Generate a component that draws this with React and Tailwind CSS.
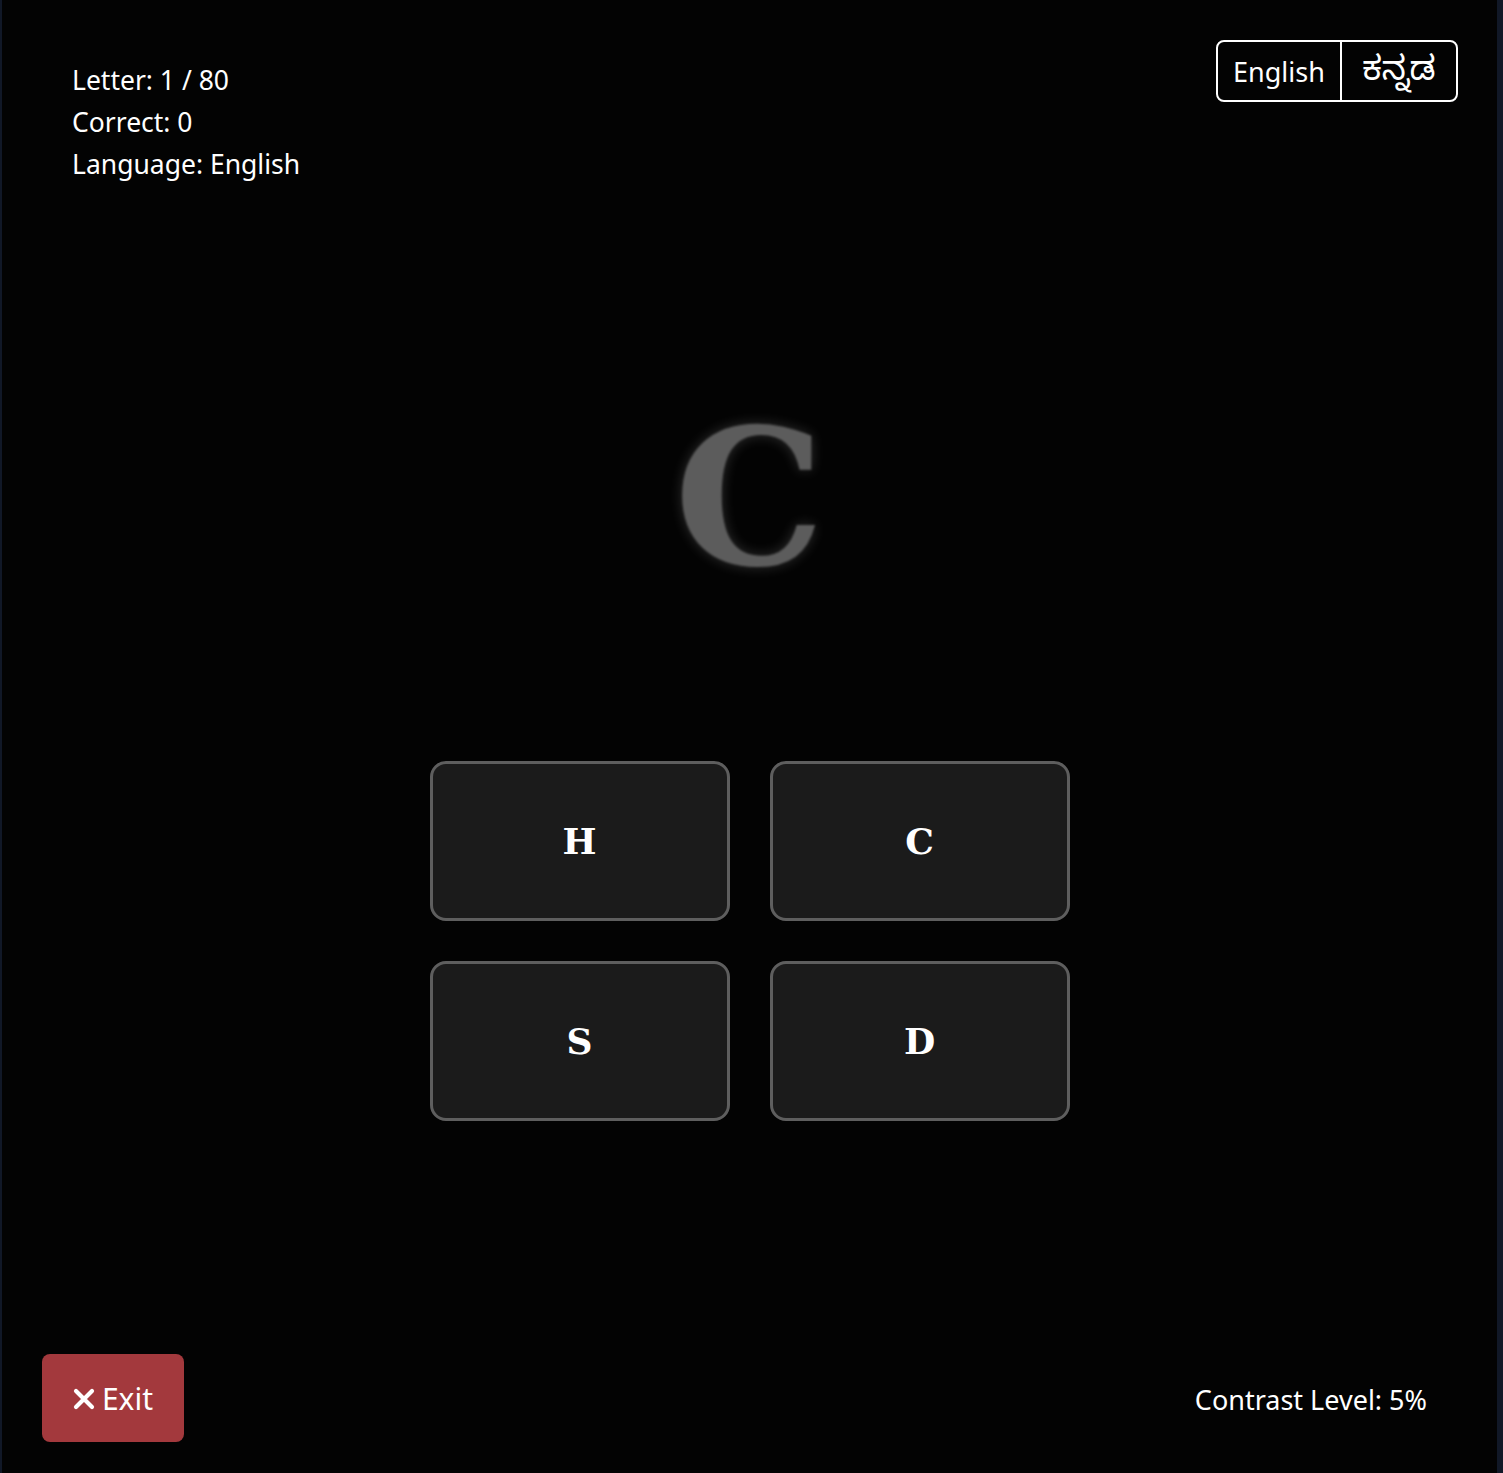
import { useState } from 'react';

const options = ['H', 'C', 'S', 'D'];

export default function App() {
  const [lang, setLang] = useState('en');

  return (
    <div className="min-h-[1473px] bg-[#111827] pl-[2px] pr-[6px]">
      <div
        className="flex h-[1473px] flex-col bg-[#030303] text-white"
        style={{ fontFamily: '"Noto Sans", "Open Sans", sans-serif' }}
      >
        <div className="flex items-start justify-between pl-[70px] pr-[39px] pt-[40px]">
          <div className="mt-[19px] text-[26.5px] leading-[42px]">
            <p>Letter: 1 / 80</p>
            <p>Correct: 0</p>
            <p>Language: English</p>
          </div>
          <div className="flex h-[62px] overflow-hidden rounded-lg border-2 border-white">
            <button
              onClick={() => setLang('en')}
              className="w-[122px] text-[27px] leading-none text-white"
            >
              English
            </button>
            <div className="w-[2px] bg-white" />
            <button
              onClick={() => setLang('kn')}
              className="w-[114px] pt-[8px] text-[34px] leading-none text-white"
              style={{ fontFamily: '"Noto Sans Kannada", "Noto Sans", sans-serif' }}
            >
              ಕನ್ನಡ
            </button>
          </div>
        </div>

        <div className="mt-[193px] flex h-[240px] items-center justify-center">
          <span
            className="text-[189px] font-bold leading-none text-[#5c5c5c] blur-[1px] [text-shadow:0_0_14px_rgba(255,255,255,0.18)]"
            style={{ fontFamily: '"DejaVu Serif", serif' }}
          >
            C
          </span>
        </div>

        <div className="mt-[143px] flex justify-center">
          <div className="grid grid-cols-[300px_300px] gap-x-[40px] gap-y-[40px]">
            {options.map((o) => (
              <button
                key={o}
                className="flex h-[160px] items-center justify-center rounded-2xl border-[3px] border-[#5e5e5e] bg-[#1b1b1b] text-[36px] font-bold text-white"
                style={{ fontFamily: '"DejaVu Serif", serif' }}
              >
                {o}
              </button>
            ))}
          </div>
        </div>

        <div className="mt-auto flex items-center justify-between pb-[31px] pl-[40px] pr-[70px]">
          <button className="flex h-[88px] w-[142px] items-center justify-center gap-[7px] rounded-lg bg-[#a3393d] text-[30px] text-white">
            <svg width="22" height="22" viewBox="0 0 22 22" className="mt-[1px]">
              <path d="M3 3 L19 19 M19 3 L3 19" stroke="white" strokeWidth="4.2" strokeLinecap="round" />
            </svg>
            <span>Exit</span>
          </button>
          <p className="mt-[4px] text-[27px]">Contrast Level: 5%</p>
        </div>
      </div>
    </div>
  );
}
